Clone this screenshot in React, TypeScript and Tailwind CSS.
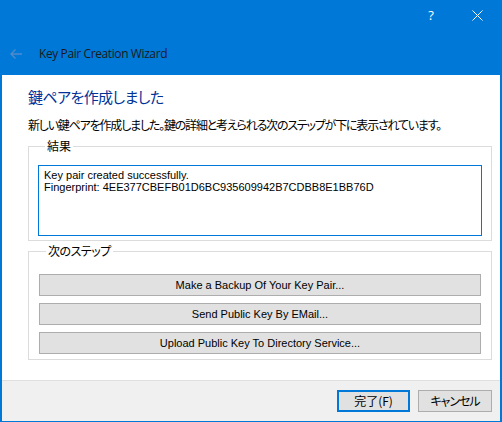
import React from 'react';

const jp = "font-['Noto_Sans_CJK_JP',sans-serif] [font-feature-settings:'palt']";
const ui = "font-['Liberation_Sans','Noto_Sans_CJK_JP',sans-serif]";

function StepButton({ label }: { label: string }) {
    return (
        <button className={`h-[22px] w-full border border-[#adadad] bg-[#e1e1e1] text-[11px] leading-none text-black ${ui}`}>
            {label}
        </button>
    );
}

export default function App() {
    return (
        <div className="flex h-[422px] w-[502px] flex-col border-x-2 border-b border-[#0078d7] bg-white">
            {/* title bar */}
            <div className="flex h-[75px] flex-col bg-[#0078d7]">
                <div className="flex h-[31px] justify-end text-white">
                    <div className="flex w-[46px] items-center justify-center font-['Open_Sans',sans-serif] text-[13px]">?</div>
                    <div className="flex w-[46px] items-center justify-center">
                        <svg width="11" height="11" viewBox="0 0 11 11" stroke="white" strokeWidth="1">
                            <path d="M0.5 0.5 L10.5 10.5 M10.5 0.5 L0.5 10.5" />
                        </svg>
                    </div>
                </div>
                <div className="flex h-[44px] items-center pl-[7px] pt-[2px]">
                    <svg width="14" height="12" viewBox="0 0 14 12" fill="none" stroke="#4f8bc9" strokeWidth="1.4">
                        <path d="M13 6 H2 M6.5 1.5 L2 6 L6.5 10.5" />
                    </svg>
                    <span className="ml-[16px] font-['Open_Sans',sans-serif] text-[12px] tracking-[-0.4px] text-[#1a1a1a]">
                        Key Pair Creation Wizard
                    </span>
                </div>
            </div>

            {/* body */}
            <div className="flex flex-1 flex-col pl-[26px] pr-[8px]">
                <h1 className={`mt-[12px] text-[15px] leading-[20px] tracking-[-0.6px] text-[#003399] ${jp}`}>
                    鍵ペアを作成しました
                </h1>
                <p className={`mt-[10px] text-[12px] leading-[16px] tracking-[-1.2px] text-black ${jp}`}>
                    新しい鍵ペアを作成しました。鍵の詳細と考えられる次のステップが下に表示されています。
                </p>

                <fieldset className="mt-[6px] h-[102px] border border-[#dcdcdc] px-[9px] pb-[8px]">
                    <legend className={`ml-[7px] px-[2px] text-[12px] leading-[14px] text-black ${jp}`}>結果</legend>
                    <div className={`mt-[12px] h-[71px] border border-[#0078d7] px-[5px] pt-[3px] text-[11px] leading-[12px] text-black ${ui}`}>
                        <div>Key pair created successfully.</div>
                        <div>Fingerprint: 4EE377CBEFB01D6BC935609942B7CDBB8E1BB76D</div>
                    </div>
                </fieldset>

                <fieldset className="mt-[3px] h-[116px] border border-[#dcdcdc] px-[10px] pb-[8px]">
                    <legend className={`ml-[7px] px-[2px] text-[12px] leading-[14px] tracking-[-0.5px] text-black ${jp}`}>次のステップ</legend>
                    <div className="mt-[16px] flex flex-col gap-[7px]">
                        <StepButton label="Make a Backup Of Your Key Pair..." />
                        <StepButton label="Send Public Key By EMail..." />
                        <StepButton label="Upload Public Key To Directory Service..." />
                    </div>
                </fieldset>
            </div>

            {/* footer */}
            <div className="flex h-[41px] items-start justify-end gap-[8px] border-t border-[#dfdfdf] bg-[#f0f0f0] pr-[8px] pt-[9px]">
                <button className={`h-[22px] w-[73px] border-2 border-[#0078d7] bg-[#e1e1e1] text-[12px] leading-none text-black ${jp}`}>
                    完了(F)
                </button>
                <button className={`h-[22px] w-[74px] border border-[#adadad] bg-[#e1e1e1] text-[12px] leading-none tracking-[-1px] text-black ${jp}`}>
                    キャンセル
                </button>
            </div>
        </div>
    );
}
